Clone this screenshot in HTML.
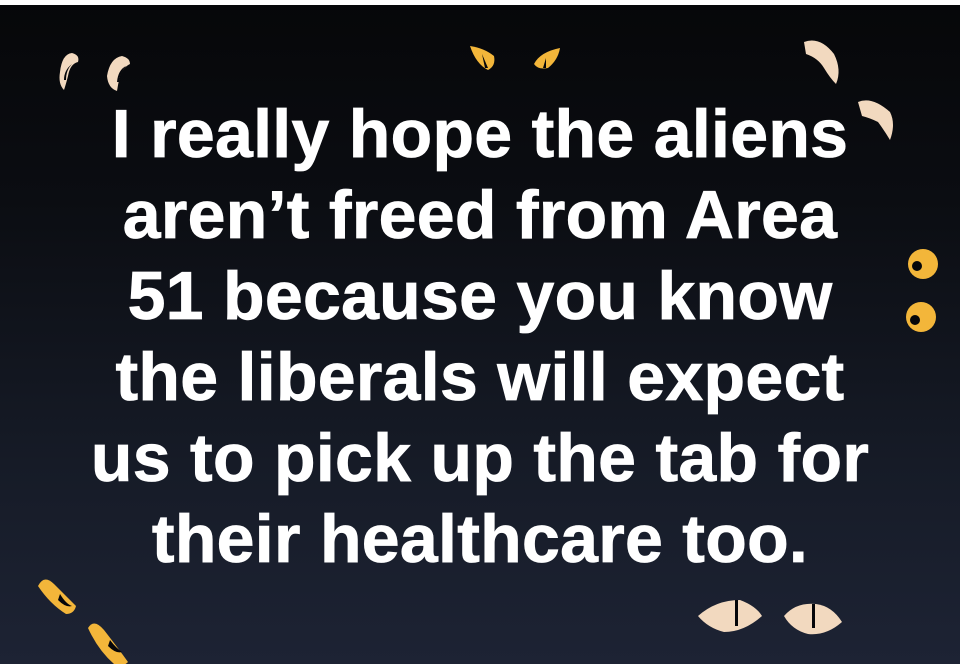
<!DOCTYPE html>
<html><head><style>
html,body{margin:0;padding:0}
body{width:960px;height:664px;overflow:hidden;position:relative;background:linear-gradient(180deg,#060709 0%,#0b0d12 30%,#161b27 70%,#1d2334 100%)}
.top{position:absolute;left:0;top:0;width:960px;height:5px;background:#fff}
.t{position:absolute;left:0;top:94px;width:960px;text-align:center;color:#fff;font-family:"Liberation Sans",Arial,sans-serif;font-weight:bold;font-size:68px;line-height:81px;letter-spacing:0.3px;-webkit-text-stroke:0.8px #fff}
svg{position:absolute;left:0;top:0}
</style></head><body>
<div class="top"></div>
<svg width="960" height="664" viewBox="0 0 960 664">
<g fill="#f2d9bf">
<path d="M60 72 Q62 54 72 53 Q80 55 78 62 Q70 64 68 76 Q66 84 64 90 Q58 84 60 72 Z"/>
<path d="M107 76 Q110 58 122 56 Q130 58 130 64 Q122 68 120 76 Q118 84 117 91 Q108 88 107 76 Z"/>
<path d="M804 42 Q820 36 834 54 Q842 70 836 84 Q830 78 824 68 Q818 58 806 54 Z"/>
<path d="M858 102 Q872 96 890 112 Q896 124 890 140 Q884 130 878 122 Q870 118 862 116 Z"/>
<path d="M698 616 Q716 600 740 600 Q756 606 762 616 Q744 632 724 632 Q708 628 698 616 Z"/>
<path d="M784 616 Q796 602 816 604 Q832 606 842 622 Q826 636 808 634 Q792 630 784 616 Z"/>
</g>
<g fill="#f3b63a">
<path d="M470 46 Q484 48 494 56 Q496 66 488 70 Q476 64 470 46 Z"/>
<path d="M534 64 Q540 52 560 48 Q558 60 548 68 Q538 70 534 64 Z"/>
<circle cx="923" cy="264" r="15"/>
<circle cx="921" cy="317" r="15"/>
<path d="M38 586 Q44 574 54 584 Q66 596 76 606 Q74 614 66 614 Q50 604 38 586 Z"/>
<path d="M88 628 Q94 618 104 630 Q118 648 128 662 Q122 668 114 664 Q98 650 88 628 Z"/>
</g>
<g fill="#05060a">
<circle cx="917" cy="266" r="5"/><circle cx="915" cy="320" r="5"/>
<rect x="735" y="600" width="3" height="26"/><rect x="812" y="604" width="3" height="24"/>
<path d="M72 64 Q66 70 66 80 L64 80 Q64 70 72 64 Z"/><path d="M126 66 Q120 72 119 82 L117 82 Q118 70 126 66 Z"/>
<path d="M482 54 L488 68 L485 68 Z"/><path d="M546 58 L546 68 L543 68 Z"/>
<path d="M60 594 Q66 604 72 606 Q66 608 58 600 Z"/>
<path d="M110 640 Q116 648 122 652 Q116 654 108 646 Z"/>
</g>
</svg>
<div class="t">I really hope the aliens<br>aren’t freed from Area<br>51 because you know<br>the liberals will expect<br>us to pick up the tab for<br>their healthcare too.</div>
</body></html>
